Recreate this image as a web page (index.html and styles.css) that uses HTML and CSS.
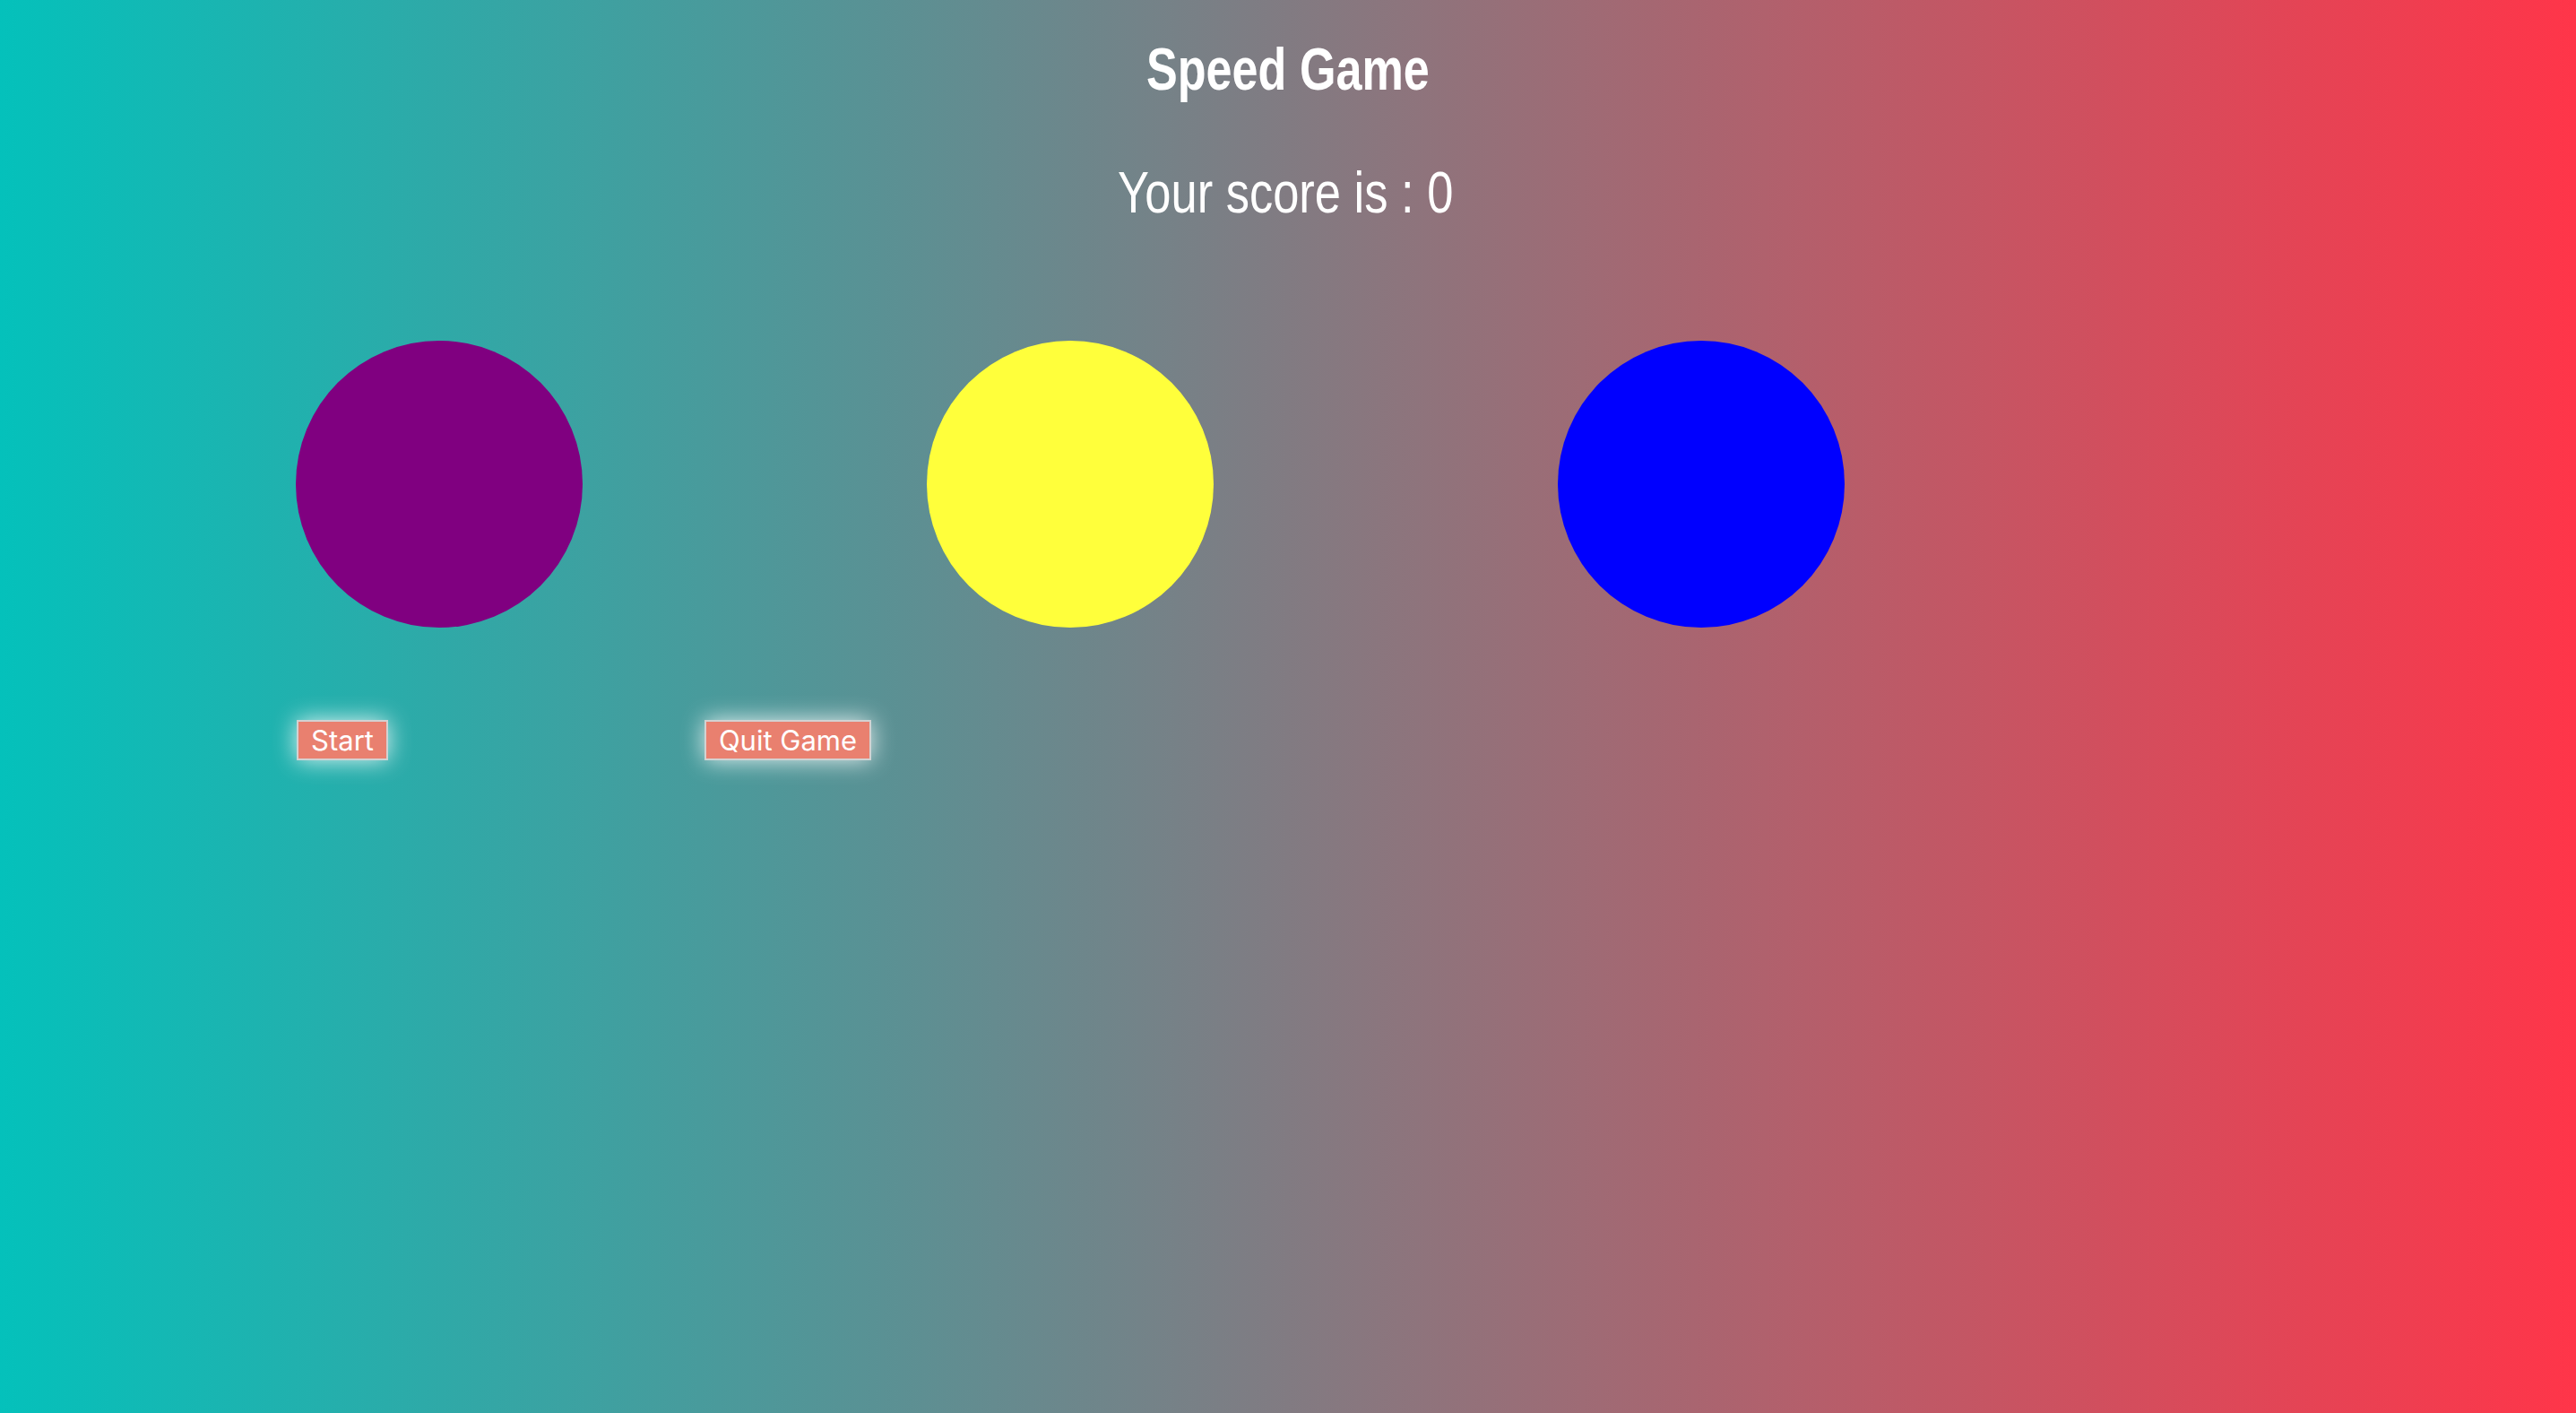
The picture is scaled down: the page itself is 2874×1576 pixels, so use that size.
FILE: index.html
```html
<!DOCTYPE html>
<html>
<head>
<meta charset="utf-8">
<title>Speed Game</title>
<link rel="stylesheet" href="styles.css">
</head>
<body>
<header class="header">
  <h1 class="title"><span class="squeeze">Speed Game</span></h1>
  <p class="score"><span class="squeeze">Your score is : <span class="score-value">0</span></span></p>
</header>
<main class="board">
  <div class="circle purple"></div>
  <div class="circle yellow"></div>
  <div class="circle blue"></div>
</main>
<div class="controls">
  <button class="btn start">Start</button>
  <button class="btn quit">Quit Game</button>
</div>
</body>
</html>
```

FILE: styles.css
```css
html, body {
  margin: 0;
  padding: 0;
  height: 100%;
}
body {
  background: linear-gradient(to right, #04c1bb, #ff3549);
  color: #fff;
  font-family: "Liberation Sans", Arial, sans-serif;
  min-height: 1576px;
}
.header {
  text-align: center;
  padding-top: 44px;
}
.title {
  margin: 0;
  font-size: 66px;
  line-height: 66px;
  font-weight: 700;
}
.squeeze {
  display: inline-block;
  transform: scaleX(0.79);
  transform-origin: center;
}
.score {
  margin: 73px 0 0 0;
  padding-right: 6px;
  font-size: 64px;
  line-height: 64px;
  font-weight: 400;
}
.score .squeeze {
  transform: scaleX(0.82);
}
.board {
  display: flex;
  gap: 384px;
  padding-left: 330px;
  margin-top: 133px;
}
.circle {
  width: 320px;
  height: 320px;
  border-radius: 50%;
  flex: none;
}
.purple { background: #800080; }
.yellow { background: #ffff3b; }
.blue { background: #0000ff; }
.controls {
  display: flex;
  gap: 353px;
  padding-left: 331px;
  margin-top: 103px;
}
.btn {
  box-sizing: border-box;
  height: 45px;
  padding: 0;
  white-space: nowrap;
  text-align: center;
  background: #e9806f;
  color: #fff;
  border: 2px solid #d2d2d2;
  border-radius: 0;
  font-family: Inter, "Noto Sans", sans-serif;
  font-size: 31px;
  line-height: 41px;
  box-shadow: 0 0 26px rgba(255, 255, 255, 0.85);
  cursor: pointer;
}
.start { width: 102px; }
.quit { width: 186px; }
```
